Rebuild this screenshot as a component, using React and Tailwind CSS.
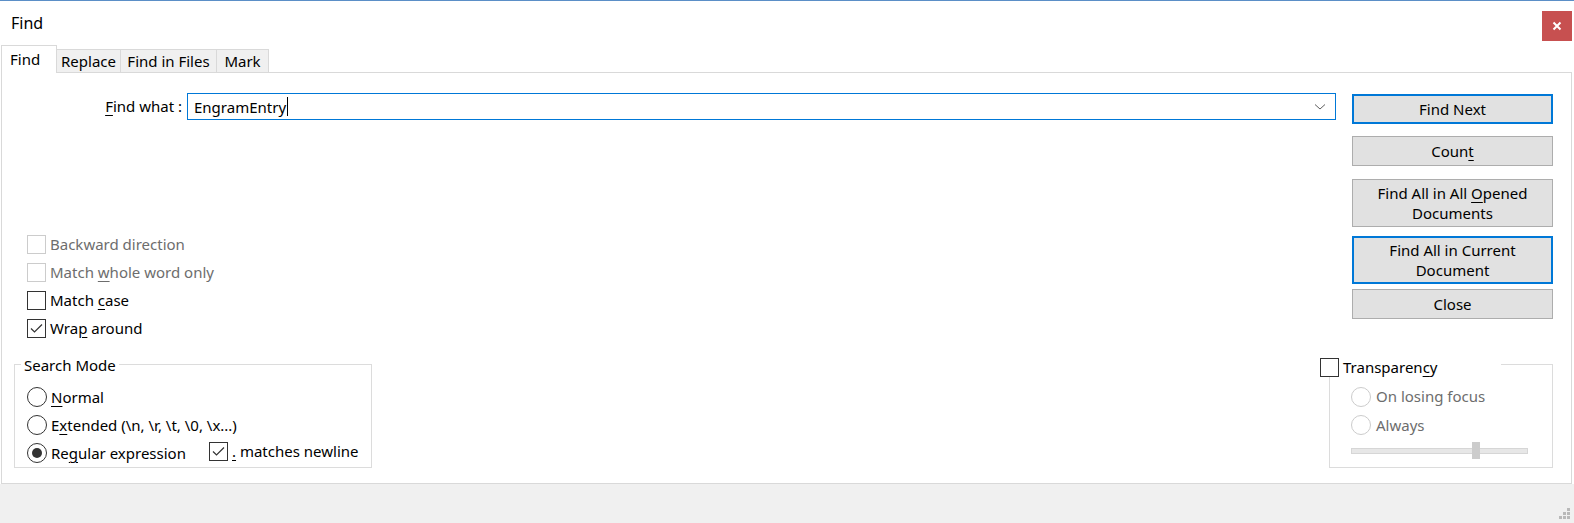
import React from 'react';

const font = { fontFamily: '"Noto Sans", "Open Sans", sans-serif' };

function Check({ checked, disabled }) {
  return (
    <span
      className={
        'flex h-[19px] w-[19px] shrink-0 items-center justify-center border bg-white ' +
        (disabled ? 'border-[#cccccc]' : 'border-[#333333]')
      }
    >
      {checked && (
        <svg width="15" height="15" viewBox="0 0 15 15">
          <path d="M2 7.5 L5.5 11 L13 3.5" fill="none" stroke="#333333" strokeWidth="1.2" />
        </svg>
      )}
    </span>
  );
}

function Radio({ checked, disabled }) {
  return (
    <span
      className={
        'flex h-[20px] w-[20px] shrink-0 items-center justify-center rounded-full border bg-white ' +
        (disabled ? 'border-[#cccccc]' : 'border-[#333333]')
      }
    >
      {checked && <span className="h-[10px] w-[10px] rounded-full bg-[#333333]" />}
    </span>
  );
}

function U({ children }) {
  return <span className="underline underline-offset-[3px] decoration-1">{children}</span>;
}

function CheckRow({ checked, disabled, children }) {
  return (
    <div className="flex h-[28px] items-center gap-[4px]">
      <Check checked={checked} disabled={disabled} />
      <span className={disabled ? 'text-[#6d6d6d]' : 'text-black'}>{children}</span>
    </div>
  );
}

function Btn({ focused, tall, children }) {
  return (
    <div
      className={
        'flex w-[201px] flex-col items-center justify-center bg-[#e1e1e1] text-center leading-[20px] ' +
        (tall ? 'h-[48px] ' : 'h-[30px] ') +
        (focused ? 'border-2 border-[#0078d7]' : 'border border-[#adadad]')
      }
    >
      {children}
    </div>
  );
}

export default function App() {
  return (
    <div
      className="flex h-[523px] w-[1574px] flex-col overflow-hidden border-t border-[#5b8fc7] bg-white text-[15px] text-black"
      style={font}
    >
      {/* title bar */}
      <div className="flex h-[44px] shrink-0 items-start justify-between">
        <span className="ml-[11px] mt-[11px] text-[16px] leading-[22px]">Find</span>
        <div className="mr-[2px] mt-[10px] flex h-[30px] w-[30px] items-center justify-center bg-[#c75050]">
          <svg width="10" height="10" viewBox="0 0 10 10">
            <path d="M1.5 1.5 L8.5 8.5 M8.5 1.5 L1.5 8.5" stroke="#ffffff" strokeWidth="2" />
          </svg>
        </div>
      </div>

      {/* tabs */}
      <div className="flex h-[27px] shrink-0 items-end pl-[1px]">
        <div className="relative z-10 -mb-[1px] flex h-[28px] w-[56px] items-start border-x border-t border-[#d9d9d9] bg-white pl-[8px] pt-[3px] leading-[20px]">
          Find
        </div>
        <div className="flex h-[23px] w-[64px] items-center justify-center border-r border-t border-[#d9d9d9] bg-[#f0f0f0] leading-[20px]">
          Replace
        </div>
        <div className="flex h-[23px] w-[96px] items-center justify-center border-r border-t border-[#d9d9d9] bg-[#f0f0f0] leading-[20px]">
          Find in Files
        </div>
        <div className="flex h-[23px] w-[52px] items-center justify-center border-r border-t border-[#d9d9d9] bg-[#f0f0f0] leading-[20px]">
          Mark
        </div>
      </div>

      {/* panel */}
      <div className="ml-[1px] flex h-[412px] w-[1571px] shrink-0 flex-col border border-[#d9d9d9] bg-white">
        <div className="flex">
          <div className="flex flex-1 flex-col">
            <div className="mt-[20px] flex items-center">
              <span className="w-[185px] pr-[5px] text-right">
                <U>F</U>ind what :
              </span>
              <div className="flex h-[27px] flex-1 items-center justify-between border border-[#0078d7] pl-[6px] pr-[9px]">
                <span className="flex items-center leading-[20px]">
                  EngramEntry
                  <span className="ml-[1px] inline-block h-[19px] w-[1px] bg-black" />
                </span>
                <svg width="12" height="8" viewBox="0 0 12 8">
                  <path d="M1 1.5 L6 6 L11 1.5" fill="none" stroke="#606060" strokeWidth="1" />
                </svg>
              </div>
            </div>

            <div className="ml-[25px] mt-[110px] flex flex-col">
              <CheckRow disabled>Backward direction</CheckRow>
              <CheckRow disabled>
                Match <U>w</U>hole word only
              </CheckRow>
              <CheckRow>
                Match <U>c</U>ase
              </CheckRow>
              <CheckRow checked>
                Wra<U>p</U> around
              </CheckRow>
            </div>
          </div>

          <div className="ml-[16px] mr-[18px] mt-[21px] flex flex-col">
            <Btn focused>Find Next</Btn>
            <div className="mt-[12px]">
              <Btn>
                <span>
                  Coun<U>t</U>
                </span>
              </Btn>
            </div>
            <div className="mt-[13px]">
              <Btn tall>
                <span>
                  Find All in All <U>O</U>pened
                </span>
                <span>Documents</span>
              </Btn>
            </div>
            <div className="mt-[9px]">
              <Btn tall focused>
                <span>Find All in Current</span>
                <span>Document</span>
              </Btn>
            </div>
            <div className="mt-[5px]">
              <Btn>Close</Btn>
            </div>
          </div>
        </div>

        {/* group boxes */}
        <div className="mt-[22px] flex items-start justify-between pl-[12px] pr-[18px]">
          <div className="relative h-[104px] w-[358px] border border-[#dcdcdc] pl-[12px] pt-[18px]">
            <span className="absolute left-[6px] top-[-10px] bg-white px-[3px] leading-[20px]">Search Mode</span>
            <div className="flex h-[28px] items-center gap-[4px]">
              <Radio />
              <span>
                <U>N</U>ormal
              </span>
            </div>
            <div className="flex h-[28px] items-center gap-[4px]">
              <Radio />
              <span>
                E<U>x</U>tended (\n, \r, \t, \0, \x...)
              </span>
            </div>
            <div className="flex h-[28px] items-center gap-[4px]">
              <Radio checked />
              <span className="w-[154px]">
                Re<U>g</U>ular expression
              </span>
              <div className="-mt-[3px] flex items-center gap-[4px]">
                <Check checked />
                <span>
                  <U>.</U> matches newline
                </span>
              </div>
            </div>
          </div>

          <div className="relative h-[104px] w-[224px] border border-[#dcdcdc] pl-[21px] pt-[17px]">
            <div className="absolute left-[-10px] top-[-8px] flex h-[20px] w-[181px] items-center gap-[4px] bg-white">
              <Check />
              <span className="leading-[20px]">
                Transparen<U>c</U>y
              </span>
            </div>
            <div className="flex h-[29px] items-center gap-[5px] text-[#6d6d6d]">
              <Radio disabled />
              <span>On losing focus</span>
            </div>
            <div className="flex h-[28px] items-center gap-[5px] text-[#6d6d6d]">
              <Radio disabled />
              <span>Always</span>
            </div>
            <div className="relative mt-[3px] flex h-[17px] w-[177px] items-center">
              <div className="h-[6px] w-full border border-[#d6d6d6] bg-[#e7e7e7]" />
              <div className="absolute left-[121px] top-0 h-[17px] w-[8px] bg-[#cccccc]" />
            </div>
          </div>
        </div>
      </div>

      {/* footer */}
      <div className="flex flex-1 items-end justify-end bg-[#f0f0f0] pb-[4px] pr-[4px]">
        <svg width="11" height="11" viewBox="0 0 11 11">
          <rect x="8" y="0" width="3" height="3" fill="#b9b9b9" />
          <rect x="4" y="4" width="3" height="3" fill="#b9b9b9" />
          <rect x="8" y="4" width="3" height="3" fill="#b9b9b9" />
          <rect x="0" y="8" width="3" height="3" fill="#b9b9b9" />
          <rect x="4" y="8" width="3" height="3" fill="#b9b9b9" />
          <rect x="8" y="8" width="3" height="3" fill="#b9b9b9" />
        </svg>
      </div>
    </div>
  );
}
